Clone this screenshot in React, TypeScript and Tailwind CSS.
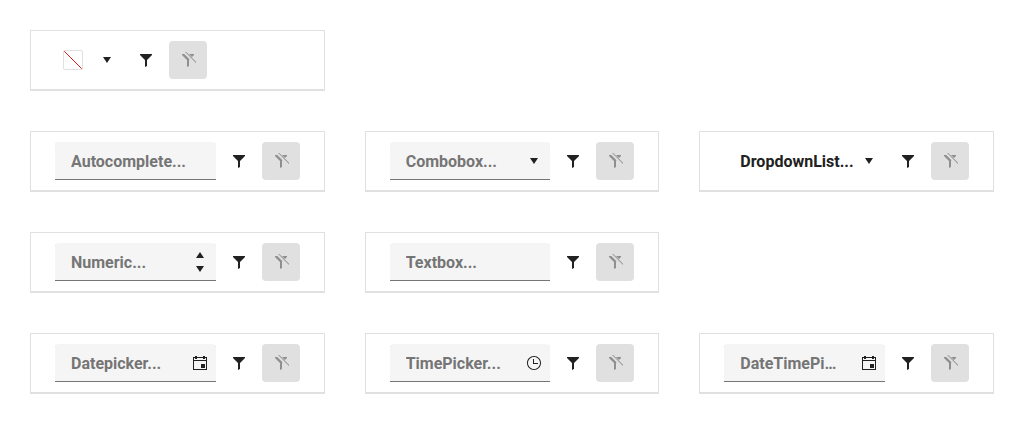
import type { ReactNode } from "react";

function Icon({ children, className = "" }: { children: ReactNode; className?: string }) {
  return (
    <svg viewBox="0 0 512 512" fill="currentColor" aria-hidden="true" className={`size-4 shrink-0 ${className}`}>
      {children}
    </svg>
  );
}

const CaretDown = ({ className }: { className?: string }) => (
  <Icon className={className}>
    <path d="M256 352 128 160h256z" />
  </Icon>
);

const CalendarIcon = () => (
  <Icon>
    <path d="M416 64V32h-64v32H160V32H96v32H32v416h448V64zm32 384H64V192h384zM64 160V96h32v32h64V96h192v32h64V96h32v64zm352 256H288V288h128z" />
  </Icon>
);

const ClockIcon = () => (
  <Icon>
    <path d="M256 64c51.300 0 99.500 20 135.800 56.200C428 156.500 448 204.700 448 256s-20 99.500-56.200 135.800C355.500 428 307.300 448 256 448s-99.500-20-135.800-56.200C84 355.500 64 307.300 64 256s20-99.500 56.200-135.800C156.500 84 204.700 64 256 64m0-32C132.300 32 32 132.300 32 256s100.300 224 224 224 224-100.300 224-224S379.700 32 256 32m128 256H224V128h32v128h128z" />
  </Icon>
);

function FilterButtons() {
  return (
    <>
      <button type="button" aria-label="Choose operator" className="flex size-[38px] shrink-0 items-center justify-center rounded">
        <Icon>
          <path d="M64 64v32l160 160v224l64-32V256L448 96V64z" />
        </Icon>
      </button>
      <button
        type="button"
        disabled
        aria-label="Clear filter"
        className="flex size-[38px] shrink-0 items-center justify-center rounded bg-[#e0e0e0] text-[#8f8f8f]"
      >
        <Icon>
          <path d="M64 64v32l160 160v224l64-32V256l16-24L136 64zM288 64h160v32l-64 64zM198 0 512 314v34L164 0z" />
        </Icon>
      </button>
    </>
  );
}

function FilterCell({ children }: { children: ReactNode }) {
  return (
    <div className="flex gap-1 border border-b-2 border-[#e0e0e0] px-6 py-2.5">
      {children}
      <FilterButtons />
    </div>
  );
}

function Field({ label, children }: { label: string; children?: ReactNode }) {
  return (
    <div className="flex h-[38px] min-w-0 flex-1 items-center rounded-t bg-[#f5f5f5] shadow-[inset_0_-1px_#757575]">
      <input
        type="text"
        aria-label={label.replace("...", "")}
        placeholder={label}
        className="h-full w-full min-w-0 flex-1 bg-transparent pl-4 pr-5 pt-px text-ellipsis outline-none placeholder:text-[#757575]"
      />
      {children}
    </div>
  );
}

function FieldButton({ label, children }: { label: string; children: ReactNode }) {
  return (
    <button type="button" aria-label={label} className="flex h-full w-6 shrink-0 items-center pr-2">
      {children}
    </button>
  );
}

export default function App() {
  return (
    <main className="grid grid-cols-3 gap-10 p-[30px] font-['Roboto',sans-serif] text-base font-bold text-[#212121]">
      <FilterCell>
        <button type="button" aria-label="Pick a color" className="flex h-[38px] items-center gap-4 px-2">
          <svg viewBox="0 0 18 18" aria-hidden="true" className="size-5 rounded-[2px] border border-[#e0e0e0]">
            <path d="M0 0 18 18" stroke="#e02020" />
          </svg>
          <CaretDown />
        </button>
      </FilterCell>
      <div className="col-span-2" />

      <FilterCell>
        <Field label="Autocomplete..." />
      </FilterCell>
      <FilterCell>
        <Field label="Combobox...">
          <FieldButton label="Open list">
            <CaretDown />
          </FieldButton>
        </Field>
      </FilterCell>
      <FilterCell>
        <div className="relative h-[38px] min-w-0 flex-1">
          <select aria-label="Dropdown list" className="h-full w-full appearance-none bg-transparent pl-4 pr-7 pt-px font-bold outline-none">
            <option>DropdownList...</option>
          </select>
          <CaretDown className="pointer-events-none absolute inset-y-0 right-2 my-auto" />
        </div>
      </FilterCell>

      <FilterCell>
        <Field label="Numeric...">
          <div className="flex h-full w-6 shrink-0 flex-col justify-center">
            <button type="button" aria-label="Increase value" className="h-3.5">
              <Icon className="-my-px">
                <path d="m256 160 128 192H128z" />
              </Icon>
            </button>
            <button type="button" aria-label="Decrease value" className="h-3.5">
              <CaretDown className="-my-px" />
            </button>
          </div>
        </Field>
      </FilterCell>
      <FilterCell>
        <Field label="Textbox..." />
      </FilterCell>
      <div />

      <FilterCell>
        <Field label="Datepicker...">
          <FieldButton label="Open calendar">
            <CalendarIcon />
          </FieldButton>
        </Field>
      </FilterCell>
      <FilterCell>
        <Field label="TimePicker...">
          <FieldButton label="Open time list">
            <ClockIcon />
          </FieldButton>
        </Field>
      </FilterCell>
      <FilterCell>
        <Field label="DateTimePicker...">
          <FieldButton label="Open date and time">
            <CalendarIcon />
          </FieldButton>
        </Field>
      </FilterCell>
    </main>
  );
}
